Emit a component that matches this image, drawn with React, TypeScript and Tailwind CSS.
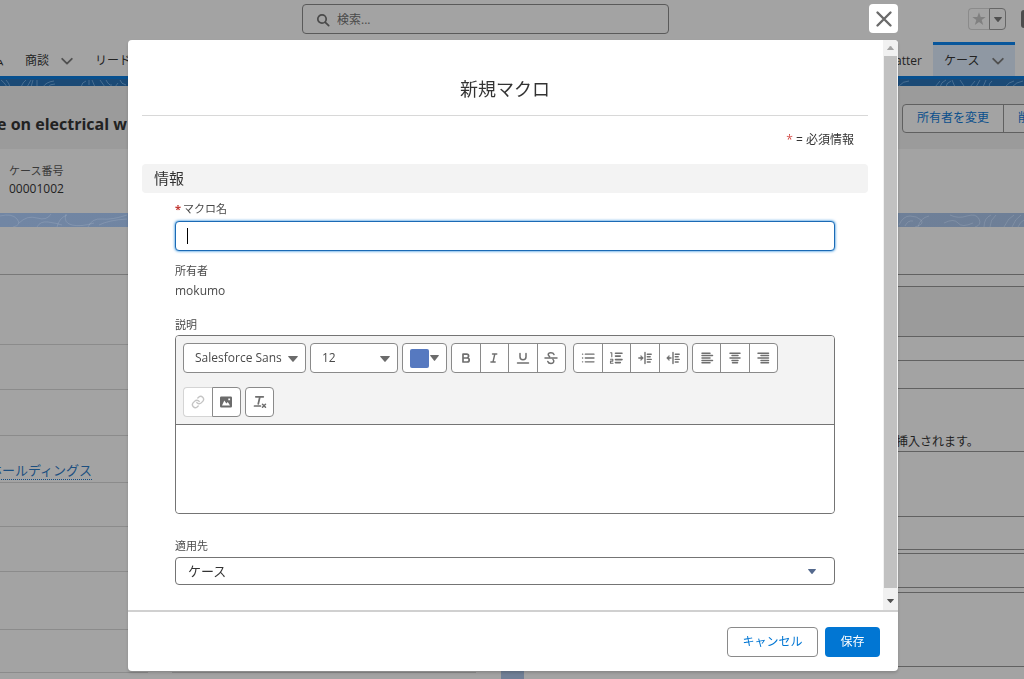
import type { ReactNode } from "react";

const strokeIcon = {
  fill: "none",
  stroke: "currentColor",
  strokeLinecap: "round" as const,
  strokeLinejoin: "round" as const,
};

function Chevron() {
  return (
    <svg className="h-3 w-3" viewBox="0 0 12 12" {...strokeIcon} strokeWidth="1.8" aria-hidden="true">
      <path d="M1.2 3.8 6 8.6l4.8-4.8" />
    </svg>
  );
}

function Caret({ className }: { className: string }) {
  return (
    <svg className={className} viewBox="0 0 10 6" preserveAspectRatio="none" fill="currentColor" aria-hidden="true">
      <path d="M.6 0h8.8q.7.1.3.8L5.6 5.6q-.6.6-1.2 0L.3.8Q-.1.1.6 0Z" />
    </svg>
  );
}

function NavContours() {
  return (
    <svg className="h-full w-full" viewBox="0 0 1024 8" preserveAspectRatio="xMinYMin slice" fill="none" stroke="#fff" strokeOpacity=".2" aria-hidden="true">
      <path d="M1 1q4 3 6 7M6 1q3 3 4 7M21 8q2-5 5-7M27 8l4-7M33 1l-2 7M37 1v7M43 8q3-5 11-6M48 8q2-3 7-3M81 8q1-5 5-6M89 1v5M92 1l3 7M100 1l5 7M106 1q3 6 6 5M115 8l3-4M120 1q1 4 6 5" />
      <path d="M899 7q4-5 10-5M935 8l5-6M940 8q1-5 6-7M946 8q0-4 5-6M952 1l3 7M960 1l4 6M970 8l5-6M976 8l4-7M983 8l3-7M989 8q0-4 3-6M1005 8q4-5 9-6M1012 8q4-5 11-6" />
    </svg>
  );
}

function PageContours() {
  return (
    <svg className="h-full w-full" viewBox="0 0 1024 14" preserveAspectRatio="xMinYMin slice" fill="none" stroke="#fff" strokeOpacity=".12" aria-hidden="true">
      <path d="M0 3q12-3 17 3t-4 8M19 10q8-8 18-5t14-4M37 14q3-6 11-5t14 3M57 14q2-9 10-12M66 1q-3 9 6 11t22-2M88 14q4-9 14-8t25-4M99 12q10-5 28-6" />
      <path d="M899 12q4-9 11-9t11 4-6 7M905 13q3-6 8-5M918 14q2-9 11-11M950 2q8 4 17 1t12 3-4 8M944 10q10-5 14 0t15 0M984 14q0-9 7-12M990 14q0-7 6-12M1004 14q4-9 10-12M1012 14q3-8 9-12M1018 14q2-5 6-7" />
    </svg>
  );
}

const detailRows = [
  "h-[48px] border-[#787878]",
  "h-[70px] border-[#8b8b8b]",
  "h-[45px] border-[#8b8b8b]",
  "h-[46px] border-[#8b8b8b]",
  "h-[47px] border-[#8b8b8b]",
  "h-[44px] border-[#8b8b8b]",
  "h-[45px] border-[#8b8b8b]",
  "h-[58px] border-[#8b8b8b]",
];

const composerRows = [
  "h-[48px]",
  "h-[12px]",
  "h-[50px] bg-[#9b9b9b]",
  "h-[24px]",
  "h-[28px]",
  "h-[63px]",
  "h-[65px]",
  "h-[33px]",
  "h-[4px]",
  "h-[34px]",
  "h-[5px]",
  "h-[74px]",
];

function RecordPage() {
  return (
    <div className="flex h-screen flex-col overflow-hidden bg-[#a3a3a3] text-[12px] leading-[18px] text-[#222]">
      <header className="flex h-[42px] shrink-0 items-start pl-[302px]">
        <label className="mt-1 flex h-[30px] w-[367px] shrink-0 items-center gap-[7px] rounded-[4px] border border-[#5a5a5a] pl-[13px] pt-px text-[#4a4a4a]">
          <svg className="h-[14px] w-[14px] shrink-0" viewBox="0 0 14 14" {...strokeIcon} strokeWidth="1.7" aria-hidden="true">
            <circle cx="6" cy="6" r="4.2" />
            <path d="m9.3 9.3 3.4 3.4" />
          </svg>
          <input type="search" aria-label="検索" placeholder="検索..." className="min-w-0 flex-1 bg-transparent outline-none placeholder:text-[#4a4a4a]" />
        </label>
        <div className="ml-auto mt-2 flex items-center">
          <button aria-label="お気に入り" className="flex h-[22px] w-[21px] items-center justify-center rounded-l-[4px] border border-r-0 border-[#8b8b8b] text-[#808080]">
            <svg className="h-[14px] w-[14px]" viewBox="0 0 14 14" fill="currentColor" aria-hidden="true">
              <path d="M7 .3 8.7 5h5L9.7 8l1.5 5L7 10.1 2.8 13l1.5-5L.3 5h5Z" />
            </svg>
          </button>
          <button aria-label="お気に入りリスト" className="flex h-[22px] w-[17px] items-center justify-center rounded-r-[4px] border border-[#666] text-[#505050]">
            <Caret className="h-[5px] w-2" />
          </button>
          <span className="ml-[15px] h-[18px] w-[3px] rounded-l-[3px] bg-[#4c4c4c]" />
        </div>
      </header>

      <nav className="flex h-[34px] shrink-0">
        <div className="flex flex-1 items-center pt-[3px]">
          <div className="flex w-1 justify-end overflow-hidden">
            <a href="#home">ム</a>
          </div>
          <a href="#opportunities" className="ml-[21px] shrink-0">商談</a>
          <button aria-label="商談メニュー" className="ml-3 text-[#505050]"><Chevron /></button>
          <a href="#leads" className="ml-[22px] shrink-0">リード</a>
          <a href="#chatter" className="ml-auto shrink-0">Chatter</a>
        </div>
        <div className="ml-[11px] mr-[9px] flex w-[82px] shrink-0 items-center justify-between border-t-3 border-[#07569c] bg-[#8f98a3] px-[11px]">
          <a href="#cases">ケース</a>
          <button aria-label="ケースメニュー" className="text-[#505050]"><Chevron /></button>
        </div>
      </nav>
      <div className="h-[10px] shrink-0 overflow-hidden border-t-3 border-[#07508f] bg-[#1b4a76]"><NavContours /></div>

      <section className="flex h-[63px] shrink-0 items-center justify-between bg-[#9b9b9b]">
        <div className="flex w-[127px] justify-end overflow-hidden">
          <h1 className="mt-3 shrink-0 text-[16px] font-bold leading-6">ce on electrical w</h1>
        </div>
        <div className="-mr-[21px] mt-px flex h-[29px] rounded-[4px] border border-[#606060] bg-[#a3a3a3] text-[#0a4f8c]">
          <button className="px-[14px]">所有者を変更</button>
          <button className="border-l border-[#606060] px-[14px]">削</button>
        </div>
      </section>
      <section className="h-[64px] shrink-0 pl-[9px] pt-[13px]">
        <p className="text-[11px] text-[#3a3a3a]">ケース番号</p>
        <p>00001002</p>
      </section>
      <div className="h-[14px] shrink-0 overflow-hidden bg-linear-to-r from-[#7186a4] to-[#6e7f97]"><PageContours /></div>

      <main className="flex min-h-0 flex-1">
        <div className="flex w-[501px] shrink-0 flex-col">
          {detailRows.map((row, i) => (
            <div key={i} className={`shrink-0 border-b ${row}`}>
              {i === 4 && (
                <div className="mt-[25px] flex w-[92px] justify-end overflow-hidden">
                  <a href="#account" className="shrink-0 border-b border-dotted border-[#134d85] text-[13px] leading-[18px] text-[#1c4f80]">ホールディングス</a>
                </div>
              )}
            </div>
          ))}
          <div className="mr-[25px] flex h-[43px] shrink-0 gap-6">
            <div className="w-[148px] border-b border-[#8b8b8b]" />
            <div className="flex-1 border-b border-[#8b8b8b]" />
          </div>
        </div>
        <div className="w-[23px] shrink-0 bg-[#707f96]" />
        <div className="min-w-0 flex-1">
          {composerRows.map((row, i) => (
            <div key={i} className={`border-b border-[#616161] ${row}`}>
              {i === 5 && <p className="pl-[372px] pt-[44px]">挿入されます。</p>}
            </div>
          ))}
        </div>
      </main>
    </div>
  );
}

function Tool({ label, children }: { label: string; children: ReactNode }) {
  return (
    <button type="button" aria-label={label} title={label} className="flex flex-1 items-center justify-center text-[#6f6f6f]">
      <svg className="h-[14px] w-[14px]" viewBox="0 0 14 14" {...strokeIcon} strokeWidth="1.3" aria-hidden="true">
        {children}
      </svg>
    </button>
  );
}

function ToolSelect({ label, value, className }: { label: string; value: string; className: string }) {
  return (
    <div className={`relative h-[30px] ${className}`}>
      <select aria-label={label} className="h-full w-full appearance-none rounded-[4px] border border-[#8a8a8a] bg-white pl-[11px] text-[12px] text-[#4a4a4a] outline-none">
        <option>{value}</option>
      </select>
      <Caret className="pointer-events-none absolute right-2 top-[13px] h-[6px] w-[10px] text-[#6b6b6b]" />
    </div>
  );
}

const group = "flex h-[30px] divide-x divide-[#8a8a8a] rounded-[4px] border border-[#8a8a8a] bg-white";

function Toolbar() {
  return (
    <div role="toolbar" aria-label="書式" className="flex flex-wrap gap-x-1 gap-y-[14px] rounded-t-[3px] border-b border-[#747474] bg-[#f3f3f3] p-[7px]">
      <ToolSelect label="フォント" value="Salesforce Sans" className="w-[123px]" />
      <ToolSelect label="フォントサイズ" value="12" className="w-[88px]" />
      <button type="button" aria-label="文字色" className="flex h-[30px] w-[45px] items-center justify-center gap-px rounded-[4px] border border-[#8a8a8a] bg-white text-[#6b6b6b]">
        <span className="h-[19px] w-[19px] rounded-[2px] bg-[#5679c0]" />
        <Caret className="h-[6px] w-[9px]" />
      </button>
      <div className={`${group} mr-[3px] w-[115px]`}>
        <Tool label="太字">
          <path strokeWidth="1.7" d="M4 3.2h3.7a1.8 1.8 0 0 1 0 3.8H4Zm0 3.8h4.2a2 2 0 0 1 0 4H4Z" />
        </Tool>
        <Tool label="斜体">
          <path strokeWidth="1.4" d="M5.500 3h4.300M3.900 11h4.300M7.800 3 6 11" />
        </Tool>
        <Tool label="下線">
          <path strokeWidth="1.5" d="M4 2.5v3.3a3 3 0 0 0 6 0V2.5M1.500 12h11" />
        </Tool>
        <Tool label="取り消し線">
          <path strokeWidth="1.5" d="M10 3.6C9 1 4.3 1.2 4.2 3.6c0 1 .5 1.5 1.4 1.900M1 7h12M9 8.5c1.500 1.200.900 4-2 4-1.700 0-2.800-.700-3.200-2" />
        </Tool>
      </div>
      <div className={`${group} w-[115px]`}>
        <Tool label="箇条書き">
          <path d="M4.300 3.200h8.700M4.300 7h8.700M4.300 10.800h8.700" />
          <path d="M1.500 3.200h.2M1.500 7h.2M1.500 10.800h.2" />
        </Tool>
        <Tool label="番号付きリスト">
          <path strokeWidth="1.6" d="M6.5 2.2H13M6.5 5.1h4.8M6.5 8.6H13M6.5 11.6h4.8" />
          <path strokeWidth="1.1" d="M1.6 1.8h1.2v4M1.5 8.3h2.3v1.8H1.5v2.2h2.5" />
        </Tool>
        <Tool label="インデント">
          <path strokeWidth="1.4" d="M7 1.500v11M9.300 3.200h3.900M9.300 5.800h2.900M9.300 8.400h3.900M9.300 11h2.900M.8 7h3.800" />
          <path fill="currentColor" strokeWidth=".7" d="M3.200 4.800 5.200 7l-2 2.200Z" />
        </Tool>
        <Tool label="アウトデント">
          <path strokeWidth="1.4" d="M7 1.500v11M9.300 3.200h3.900M9.300 5.800h2.900M9.300 8.400h3.900M9.300 11h2.900M1.500 7H5" />
          <path fill="currentColor" strokeWidth=".7" d="M2.800 4.800.8 7l2 2.200Z" />
        </Tool>
      </div>
      <div className={`${group} w-[86px]`}>
        <Tool label="左揃え">
          <path strokeWidth="1.5" d="M2 2.200h8M2 4.600h10.500M2 7h8M2 9.400h10.500M2 11.800h8" />
        </Tool>
        <Tool label="中央揃え">
          <path strokeWidth="1.5" d="M2 2.200h10M4 4.600h6M2 7h10M4 9.400h6M4.500 11.800h5" />
        </Tool>
        <Tool label="右揃え">
          <path strokeWidth="1.5" d="M2 2.200h10.500M5 4.600h7.500M2 7h10.500M5 9.400h7.500M5 11.800h7.500" />
        </Tool>
      </div>
      <div className="flex h-[30px] w-[58px] text-[#6b6b6b]">
        <button type="button" disabled aria-label="リンク" className="flex flex-1 items-center justify-center rounded-l-[4px] border border-r-0 border-[#d4d4d4] bg-white text-[#c4c4c4]">
          <svg className="h-[14px] w-[14px]" viewBox="0 0 24 24" {...strokeIcon} strokeWidth="2.4" aria-hidden="true">
            <path d="M10 13a5 5 0 0 0 7.500.5l3-3a5 5 0 0 0-7-7l-1.800 1.700M14 11a5 5 0 0 0-7.500-.5l-3 3a5 5 0 0 0 7 7l1.800-1.700" />
          </svg>
        </button>
        <button type="button" aria-label="画像" className="flex flex-1 items-center justify-center rounded-r-[4px] border border-[#8a8a8a] bg-white">
          <svg className="h-[14px] w-[14px]" viewBox="0 0 14 14" fill="currentColor" aria-hidden="true">
            <path fillRule="evenodd" d="M2.200 1.500h9.600q1.200 0 1.200 1.200v8.600q0 1.200-1.200 1.200H2.200Q1 12.500 1 11.300V2.700q0-1.200 1.200-1.200ZM3 10.600h8L8.800 6.900 7.400 8.600 5.300 5.400ZM9.300 3.400v1.800h1.800V3.400Z" />
          </svg>
        </button>
      </div>
      <div className={`${group} w-[29px]`}>
        <Tool label="書式を削除">
          <path strokeWidth="1.7" d="M2.800 1.800h7.500M6.900 1.800 5.300 8.800M1.500 11h6" />
          <path strokeWidth="1.500" d="m9.500 9.200 3 3M12.500 9.200l-3 3" />
        </Tool>
      </div>
    </div>
  );
}

function MacroDialog() {
  return (
    <div className="fixed inset-0 flex flex-col pb-2 pl-32 pr-[126px] pt-1 text-[11px] leading-4 text-[#4a4a4a]">
      <button type="button" aria-label="閉じる" className="mb-[7px] flex h-[29px] w-[29px] shrink-0 items-center justify-center self-end rounded-[4px] bg-white text-[#6b6b6b]">
        <svg className="h-[18px] w-[18px]" viewBox="0 0 18 18" {...strokeIcon} strokeWidth="2.4" aria-hidden="true">
          <path d="m2.500 2.500 13 13M15.500 2.500l-13 13" />
        </svg>
      </button>
      <div role="dialog" aria-modal="true" aria-labelledby="dialog-title" className="flex min-h-0 flex-1 flex-col overflow-hidden rounded-[4px] bg-white shadow-[0_2px_3px_rgba(0,0,0,0.16)]">
        <div className="flex min-h-0 flex-1">
          <form id="macro-form" className="min-w-0 flex-1 overflow-hidden pl-[14px] pr-[15px]">
            <h2 id="dialog-title" className="border-b border-[#d8d8d8] pb-3 pt-[35px] text-center text-[18px] leading-7 text-[#333]">新規マクロ</h2>
            <p className="pr-[14px] pt-4 text-right text-[12px] text-[#333]">
              <span className="text-[#d4504c]">*</span> = 必須情報
            </p>
            <h3 className="mt-4 rounded-[4px] bg-[#f3f3f3] pl-3 text-[15px] leading-[29px] text-[#333]">情報</h3>
            <div className="px-[33px]">
              <label htmlFor="macro-name" className="mt-2 flex gap-[2px]">
                <span className="font-bold text-[#c23934]">*</span>マクロ名
              </label>
              <div className="relative mt-[4px]">
                <input id="macro-name" type="text" required className="block h-[30px] w-full rounded-[4px] border border-[#1b6ab5] bg-white px-3 text-[13px] caret-transparent shadow-[0_0_3px_#0176d3] outline-none" />
                <span className="pointer-events-none absolute left-3 top-[7px] h-4 w-px bg-black" />
              </div>
              <p className="mt-3">所有者</p>
              <p className="mt-1 text-[12px]">mokumo</p>
              <label htmlFor="macro-description" className="mt-[18px] block">説明</label>
              <div className="mt-[2px] rounded-[4px] border border-[#747474]">
                <Toolbar />
                <textarea id="macro-description" className="block h-[88px] w-full resize-none rounded-[4px] bg-white p-3 text-[12px] outline-none" />
              </div>
              <label htmlFor="macro-target" className="mt-6 block">適用先</label>
              <div className="relative mt-[3px]">
                <select id="macro-target" className="block h-[28px] w-full appearance-none rounded-[4px] border border-[#747474] bg-white px-3 text-[13px] text-[#333] outline-none">
                  <option>ケース</option>
                </select>
                <Caret className="pointer-events-none absolute right-[19px] top-3 h-[5px] w-2 text-[#54698d]" />
              </div>
            </div>
          </form>
          <div aria-hidden="true" className="flex w-[15px] shrink-0 flex-col items-center bg-[#f1f1f1]">
            <span className="flex h-4 items-center text-[#a3a3a3]">
              <Caret className="h-1 w-[7px] rotate-180" />
            </span>
            <span className="w-[13px] flex-1 bg-[#c1c1c1]" />
            <span className="flex h-[22px] items-center pt-1 text-[#505050]">
              <Caret className="h-1 w-[7px]" />
            </span>
          </div>
        </div>
        <footer className="flex shrink-0 justify-end gap-[7px] border-t-2 border-[#d0d0d0] pb-[14px] pr-[18px] pt-[15px] text-[12px]">
          <button type="button" className="h-[30px] w-[91px] rounded-[4px] border border-[#8a8a8a] text-[#0176d3]">キャンセル</button>
          <button type="submit" form="macro-form" className="h-[30px] w-[55px] rounded-[4px] bg-[#0176d3] text-white">保存</button>
        </footer>
      </div>
    </div>
  );
}

export default function App() {
  return (
    <div className="font-['Open_Sans','Noto_Sans_CJK_JP',sans-serif]">
      <RecordPage />
      <MacroDialog />
    </div>
  );
}
